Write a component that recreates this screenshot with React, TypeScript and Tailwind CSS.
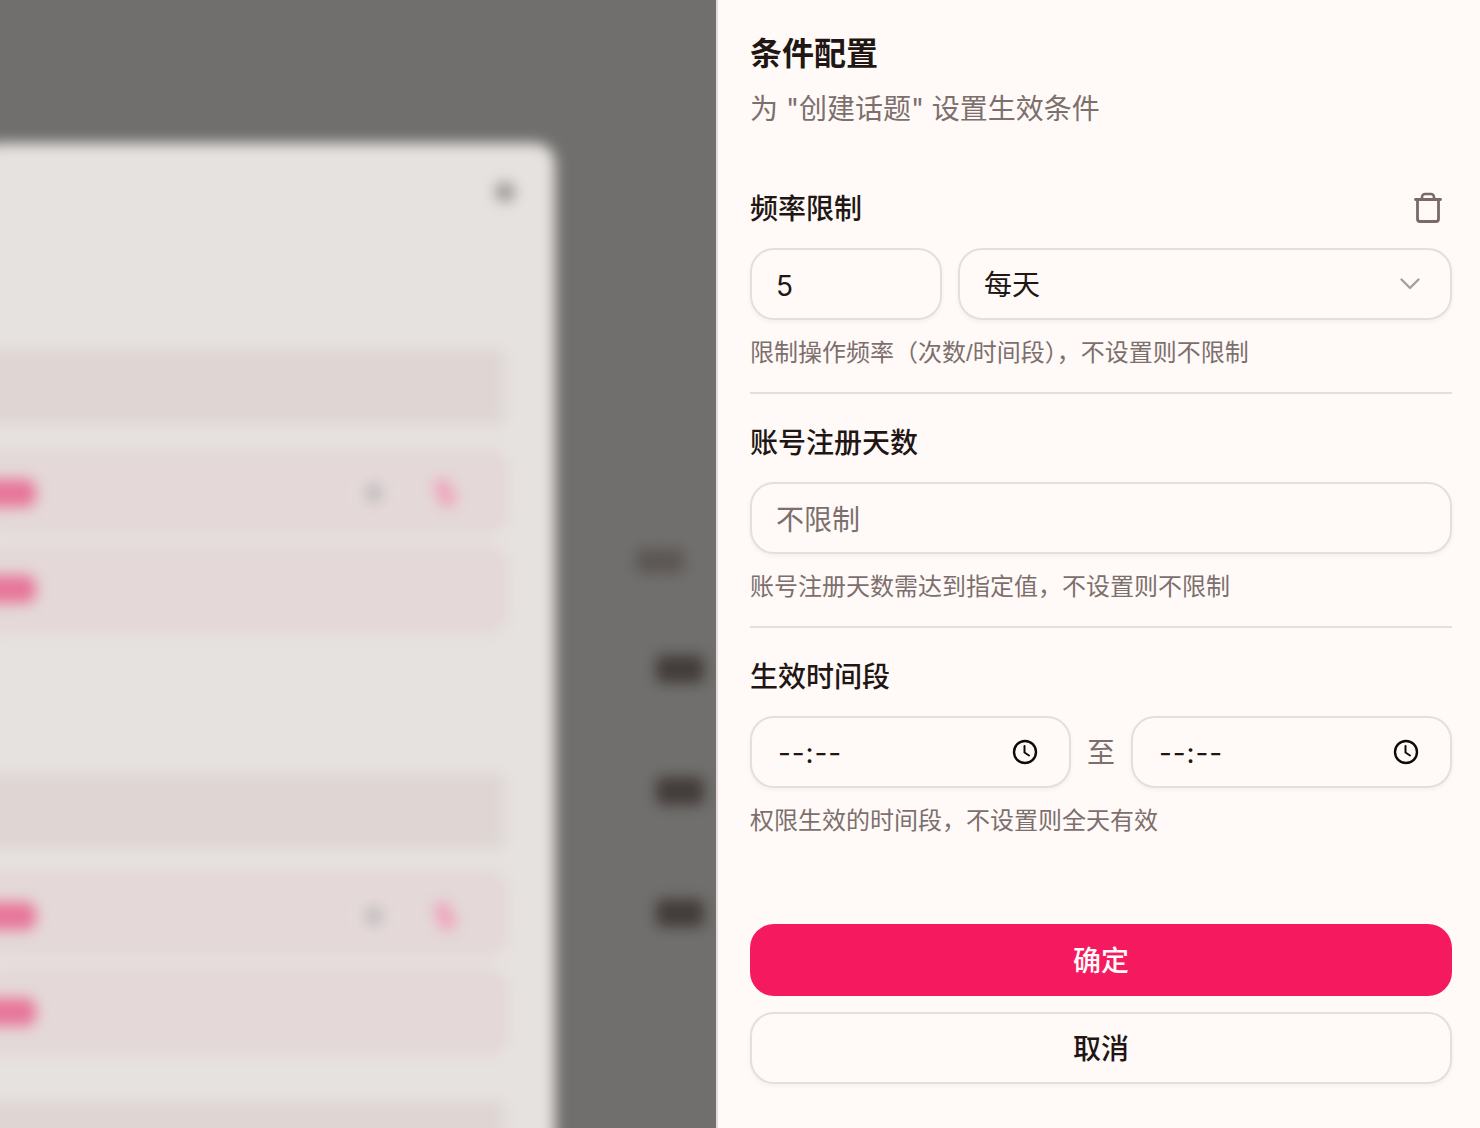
function BlurRow({ tall, actions, pad }: { tall: number; actions: boolean; pad: string }) {
  return (
    <div className={`flex items-center w-[530px] rounded-[24px] bg-[#e4d8d8] justify-between ${pad}`} style={{ height: tall }}>
      <div className="w-[56px] h-[28px] rounded-[10px] bg-[#e8769a]" />
      {actions && (
        <div className="flex items-center mr-[57px] gap-[40px]">
          <div className="flex items-center justify-center w-[46px] h-[46px] rounded-full bg-[#e6dada]">
            <div className="w-[18px] h-[22px] rounded-full bg-[#c2bebe]" />
          </div>
          <div className="w-[16px] h-[30px] -rotate-[25deg] rounded-full bg-[#efa3bc]" />
        </div>
      )}
    </div>
  )
}

function BlurredPage() {
  return (
    <div className="flex h-[1168px] w-[756px] bg-[#706f6d] pt-[163px] blur-[7px]">
      {/* dialog behind the sheet */}
      <div className="flex flex-col w-[575px] h-[1100px] shrink-0 rounded-[20px] bg-[#e6e2df]">
        <div className="flex justify-end pr-[40px] pt-[39px] h-[206px]">
          <div className="w-[20px] h-[20px] rounded-full bg-[#9a9795]" />
        </div>
        <div className="w-[525px] h-[76px] rounded-[6px] bg-[#dfd6d4]" />
        <div className="mt-[22px]"><BlurRow tall={88} actions pad="pt-[4px]" /></div>
        <div className="mt-[10px]"><BlurRow tall={90} actions={false} pad="pb-[2px]" /></div>
        <div className="w-[525px] h-[76px] mt-[138px] rounded-[6px] bg-[#dfd6d4]" />
        <div className="mt-[20px]"><BlurRow tall={88} actions pad="pt-[6px]" /></div>
        <div className="mt-[10px]"><BlurRow tall={90} actions={false} pad="" /></div>
        <div className="w-[525px] h-[76px] mt-[43px] rounded-[6px] bg-[#dfd6d4]" />
      </div>
      {/* table cells next to the dialog */}
      <div className="flex flex-col ml-[101px] pt-[406px]">
        <div className="w-[48px] h-[24px] -ml-[20px] rounded-[6px] bg-[#5c5654]" />
        <div className="w-[48px] h-[28px] mt-[82px] rounded-[6px] bg-[#433c3a]" />
        <div className="w-[48px] h-[28px] mt-[94px] rounded-[6px] bg-[#433c3a]" />
        <div className="w-[48px] h-[28px] mt-[94px] rounded-[6px] bg-[#433c3a]" />
      </div>
    </div>
  )
}

function Clock() {
  return (
    <svg width="28" height="28" viewBox="0 0 28 28" fill="none" stroke="#0c0a0a" strokeWidth="2.4" strokeLinecap="round" strokeLinejoin="round">
      <circle cx="14" cy="14" r="11" />
      <path d="M13.5 8v6.5l4.5 3" strokeWidth="2" />
    </svg>
  )
}

function TimeField() {
  return (
    <div className="flex flex-1 items-center justify-between h-[72px] pl-[26px] pr-[30px] rounded-[24px] border-2 border-[#e6dedb] bg-[#fffaf7] shadow-[0_2px_4px_rgba(60,30,20,0.05)]">
      <span className="pt-[2px] text-[28px] leading-[40px] tracking-[0.9px] text-[#1f1513]">--:--</span>
      <Clock />
    </div>
  )
}

export default function App() {
  const inputClass = 'h-[72px] rounded-[24px] border-2 border-[#e6dedb] bg-[#fffaf7] shadow-[0_2px_4px_rgba(60,30,20,0.05)] px-[24px] flex items-center text-[28px] leading-[40px]'

  return (
    <div className="flex h-screen w-full overflow-hidden bg-[#706f6d] font-['Inter','Noto_Sans_CJK_SC',sans-serif]">
      <div className="w-[716px] h-full shrink-0 overflow-hidden">
        <div className="-mt-[20px] -ml-[20px]">
          <BlurredPage />
        </div>
      </div>

      {/* sheet */}
      <div className="flex-1 h-full border-l-2 border-[#e5dcd9] bg-[#fffaf7] pl-[32px] pr-[28px] pt-[31px]">
        <h2 className="text-[32px] leading-[46px] font-semibold text-[#211614]">条件配置</h2>
        <p className="mt-[11px] text-[28px] leading-[42px] text-[#7c6f6d]">为 "创建话题" 设置生效条件</p>

        <div className="mt-[58px] pb-[22px] border-b-2 border-[#e6dedb]">
          <div className="flex items-start justify-between h-[42px]">
            <span className="text-[28px] leading-[42px] font-medium text-[#211614]">频率限制</span>
            <svg className="mr-[8px] mt-[4px]" width="32" height="32" viewBox="0 0 32 32" fill="none" stroke="#7a6a66" strokeWidth="2.8" strokeLinecap="round" strokeLinejoin="round">
              <path d="M3.5 7.5h25" />
              <path d="M5.5 7.5V27a2.5 2.5 0 0 0 2.5 2.5h16a2.5 2.5 0 0 0 2.5-2.5V7.5" />
              <path d="M10 7.5V5A3 3 0 0 1 13 2h6a3 3 0 0 1 3 3v2.5" strokeWidth="2.6" />
            </svg>
          </div>
          <div className="flex gap-[16px] mt-[18px]">
            <div className={`w-[192px] pt-[4px] text-[#211614] ${inputClass}`}>5</div>
            <div className={`flex-1 pt-[2px] justify-between text-[#211614] ${inputClass}`}>
              <span>每天</span>
              <svg className="mr-[6px] mb-[2px]" width="20" height="12" viewBox="0 0 20 12" fill="none" stroke="#a89e9b" strokeWidth="2.4" strokeLinecap="round" strokeLinejoin="round">
                <path d="M1.5 1.5 10 10l8.5-8.5" />
              </svg>
            </div>
          </div>
          <p className="mt-[16px] text-[24px] leading-[34px] text-[#7c6f6d] font-['Liberation_Sans','Noto_Sans_CJK_SC',sans-serif]">限制操作频率（次数/时间段），不设置则不限制</p>
        </div>

        <div className="pt-[28px] pb-[22px] border-b-2 border-[#e6dedb]">
          <div className="text-[28px] leading-[42px] font-medium text-[#211614]">账号注册天数</div>
          <div className={`mt-[18px] pt-[4px] text-[#7c6f6d] ${inputClass}`}>不限制</div>
          <p className="mt-[16px] text-[24px] leading-[34px] text-[#7c6f6d]">账号注册天数需达到指定值，不设置则不限制</p>
        </div>

        <div className="pt-[28px]">
          <div className="text-[28px] leading-[42px] font-medium text-[#211614]">生效时间段</div>
          <div className="flex items-center gap-[16px] mt-[18px]">
            <TimeField />
            <span className="pt-[2px] text-[28px] leading-[40px] text-[#7c6f6d]">至</span>
            <TimeField />
          </div>
          <p className="mt-[16px] text-[24px] leading-[34px] text-[#7c6f6d]">权限生效的时间段，不设置则全天有效</p>
        </div>

        <button className="block w-full h-[72px] mt-[86px] pt-[2px] rounded-[24px] bg-[#f5195f] text-[28px] font-medium text-[#fffaf7]">确定</button>
        <button className="block w-full h-[72px] mt-[16px] pt-[2px] rounded-[24px] border-2 border-[#e6dedb] bg-[#fffaf7] shadow-[0_2px_4px_rgba(60,30,20,0.05)] text-[28px] font-medium text-[#211614]">取消</button>
      </div>
    </div>
  )
}
